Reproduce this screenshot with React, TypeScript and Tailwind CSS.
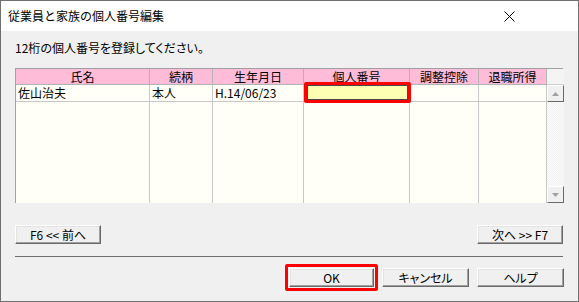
import React from 'react';

const cols = [
  { label: '氏名', w: 'w-[134px]' },
  { label: '続柄', w: 'w-[63px]' },
  { label: '生年月日', w: 'w-[91px]' },
  { label: '個人番号', w: 'w-[106px]' },
  { label: '調整控除', w: 'w-[69px]' },
  { label: '退職所得', w: 'w-[68px]' },
];

const row = ['佐山治夫', '本人', 'H.14/06/23', '', '', ''];

const ClassicButton: React.FC<{ label: string; className?: string }> = ({ label, className }) => (
  <button
    className={`h-[19px] flex items-center justify-center bg-[#f0f0f0] border border-t-white border-l-white border-r-[#696969] border-b-[#696969] shadow-[inset_-1px_-1px_0_#a0a0a0,inset_1px_1px_0_#e3e3e3] text-[12px] text-black ${className ?? ''}`}
  >
    {label}
  </button>
);

const ScrollArrow: React.FC<{ up?: boolean }> = ({ up }) => (
  <div className="w-[17px] h-[17px] bg-[#f0f0f0] border border-t-white border-l-white border-r-[#696969] border-b-[#696969] flex items-center justify-center">
    <svg width="7" height="4" viewBox="0 0 7 4">
      {up ? <polygon points="0,4 7,4 3.5,0" fill="#a0a0a0" /> : <polygon points="0,0 7,0 3.5,4" fill="#a0a0a0" />}
    </svg>
  </div>
);

export default function App() {
  return (
    <div className="w-[579px] h-[302px] flex flex-col border border-[#707070] bg-[#f0f0f0] font-['Noto_Sans_CJK_JP','Noto_Sans',sans-serif] [font-feature-settings:'palt'] text-black overflow-hidden">
      {/* Title bar */}
      <div className="h-[30px] bg-white flex items-center justify-between pl-[7px] pr-[63px] shrink-0">
        <span className="text-[12px] leading-none [font-feature-settings:normal]">従業員と家族の個人番号編集</span>
        <svg width="11" height="11" viewBox="0 0 11 11">
          <path d="M0.5 0.5 L10.5 10.5 M10.5 0.5 L0.5 10.5" stroke="#000" strokeWidth="1" />
        </svg>
      </div>

      {/* Body */}
      <div className="flex-1 flex flex-col pl-[14px] pr-[14px]">
        <div className="mt-[10px] h-[14px] text-[12px] leading-[14px]">12桁の個人番号を登録してください。</div>

        {/* Grid */}
        <div className="mt-[13px] w-[548px] h-[135px] flex border-t border-l border-[#a0a0a0] bg-[#fffff7]">
          <div className="relative w-[531px] flex flex-col">
            <div className="flex h-[16px] bg-[#ffbcd9] border-b border-[#b4b4b4]">
              {cols.map((c) => (
                <div key={c.label} className={`${c.w} border-r border-[#b4b4b4] text-center text-[12px] leading-[15px] [font-feature-settings:normal]`}>
                  {c.label}
                </div>
              ))}
            </div>
            <div className="flex h-[17px] border-b border-[#c8c8c8]">
              {cols.map((c, i) => (
                <div key={c.label} className={`${c.w} border-r border-[#c8c8c8] pl-[2px] text-[12px] leading-[16px] whitespace-nowrap [font-feature-settings:normal]`}>
                  {row[i]}
                </div>
              ))}
            </div>
            <div className="flex flex-1">
              {cols.map((c) => (
                <div key={c.label} className={`${c.w} border-r border-[#c8c8c8]`} />
              ))}
            </div>
            {/* highlighted input cell */}
            <div className="absolute left-[288px] top-[13px] w-[107px] h-[21px] border-[3px] border-[#ff0000] rounded-[2px]">
              <div className="w-full h-full bg-[#ffffb4] border border-[#4a4a4a]" />
            </div>
          </div>
          {/* Scrollbar */}
          <div className="w-[17px] flex flex-col">
            <div className="h-[16px] bg-[#f4f4f4] border-b border-[#d0d0d0]" />
            <ScrollArrow up />
            <div className="flex-1 bg-[repeating-conic-gradient(#f0f0f0_0%_25%,#fcfcfc_0%_50%)] bg-[length:2px_2px]" />
            <ScrollArrow />
          </div>
        </div>

        {/* Prev / next */}
        <div className="mt-[22px] w-[548px] flex justify-between">
          <ClassicButton label="F6 << 前へ" className="w-[86px]" />
          <ClassicButton label="次へ >> F7" className="w-[86px]" />
        </div>

        {/* Separator */}
        <div className="mt-[12px] w-[548px] h-px bg-[#6e6e6e]" />

        {/* Bottom buttons */}
        <div className="mt-[11px] w-[549px] flex justify-end gap-[8px]">
          <div className="relative">
            <ClassicButton label="OK" className="w-[85px]" />
            <div className="absolute -left-[4px] -top-[4px] -right-[4px] -bottom-[4px] border-[3px] border-[#ff0000] rounded-[2px]" />
          </div>
          <ClassicButton label="キャンセル" className="w-[87px]" />
          <ClassicButton label="ヘルプ" className="w-[87px]" />
        </div>
      </div>
    </div>
  );
}
